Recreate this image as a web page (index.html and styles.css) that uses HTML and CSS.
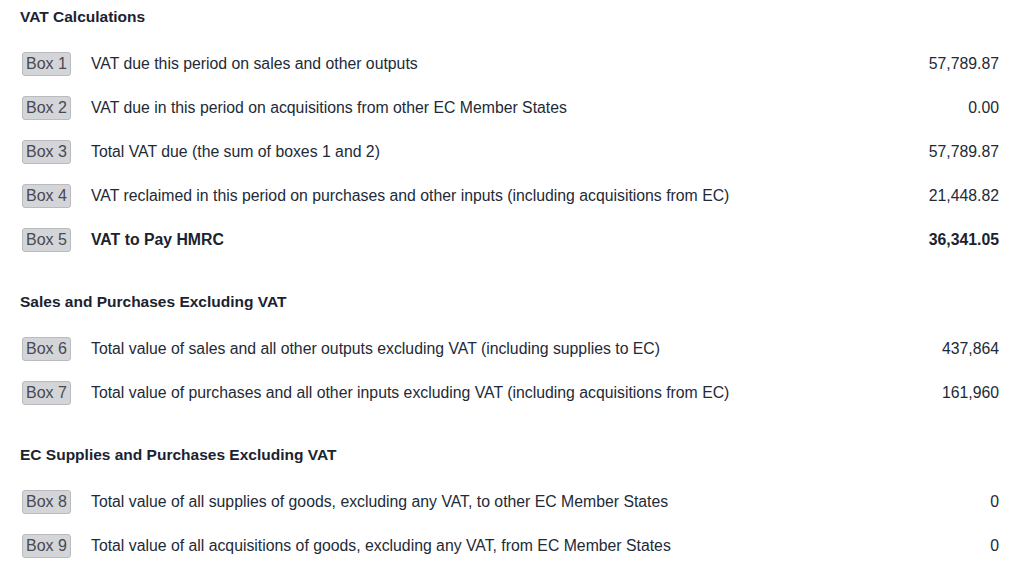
FILE: index.html
```html
<!DOCTYPE html>
<html lang="en">
<head>
<meta charset="utf-8">
<title>VAT Return</title>
<link rel="stylesheet" href="styles.css">
</head>
<body>
<main class="vat">
  <section class="group">
    <h3 class="group-title">VAT Calculations</h3>
    <div class="row"><span class="box">Box 1</span><span class="label">VAT due this period on sales and other outputs</span><span class="value">57,789.87</span></div>
    <div class="row"><span class="box">Box 2</span><span class="label">VAT due in this period on acquisitions from other EC Member States</span><span class="value">0.00</span></div>
    <div class="row"><span class="box">Box 3</span><span class="label">Total VAT due (the sum of boxes 1 and 2)</span><span class="value">57,789.87</span></div>
    <div class="row"><span class="box">Box 4</span><span class="label">VAT reclaimed in this period on purchases and other inputs (including acquisitions from EC)</span><span class="value">21,448.82</span></div>
    <div class="row row-strong"><span class="box">Box 5</span><span class="label">VAT to Pay HMRC</span><span class="value">36,341.05</span></div>
  </section>
  <section class="group">
    <h3 class="group-title">Sales and Purchases Excluding VAT</h3>
    <div class="row"><span class="box">Box 6</span><span class="label">Total value of sales and all other outputs excluding VAT (including supplies to EC)</span><span class="value">437,864</span></div>
    <div class="row"><span class="box">Box 7</span><span class="label">Total value of purchases and all other inputs excluding VAT (including acquisitions from EC)</span><span class="value">161,960</span></div>
  </section>
  <section class="group">
    <h3 class="group-title">EC Supplies and Purchases Excluding VAT</h3>
    <div class="row"><span class="box">Box 8</span><span class="label">Total value of all supplies of goods, excluding any VAT, to other EC Member States</span><span class="value">0</span></div>
    <div class="row"><span class="box">Box 9</span><span class="label">Total value of all acquisitions of goods, excluding any VAT, from EC Member States</span><span class="value">0</span></div>
  </section>
</main>
</body>
</html>
```

FILE: styles.css
```css
* { box-sizing: border-box; }
html, body { margin: 0; background: #ffffff; }
body {
  font-family: "Liberation Sans", Arial, Helvetica, sans-serif;
  color: #232a37;
  font-size: 15.8px;
}
.vat {
  display: flex;
  flex-direction: column;
  gap: 30px;
  padding: 7px 25px 0 20px;
}
.group { display: flex; flex-direction: column; }
.group-title {
  margin: 0 0 15px 0;
  font-size: 15.5px;
  line-height: 20px;
  font-weight: 700;
  color: #1b2230;
}
.row {
  display: grid;
  grid-template-columns: 49px 1fr auto;
  column-gap: 20px;
  align-items: center;
  height: 44px;
  padding-left: 2px;
}
.box {
  display: flex;
  align-items: center;
  justify-content: center;
  height: 24px;
  background: #d4d5d8;
  border: 1px solid #b9bbbf;
  border-radius: 3px;
  color: #474a50;
  font-size: 16px;
  white-space: nowrap;
}
.label { line-height: 20px; }
.value { text-align: right; line-height: 20px; }
.row-strong .label, .row-strong .value { font-weight: 700; color: #1b2230; }
```
